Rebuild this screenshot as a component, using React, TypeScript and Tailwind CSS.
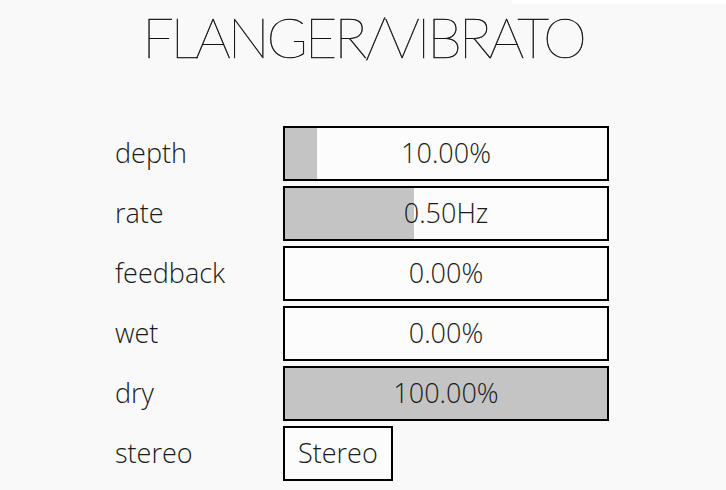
import React from 'react';

const sliders = [
  { label: 'depth', value: '10.00%', fill: 10 },
  { label: 'rate', value: '0.50Hz', fill: 40 },
  { label: 'feedback', value: '0.00%', fill: 0 },
  { label: 'wet', value: '0.00%', fill: 0 },
  { label: 'dry', value: '100.00%', fill: 100 },
];

export default function App() {
  return (
    <div className="relative w-[726px] h-[490px] bg-[#f9f9f9] overflow-hidden text-[#1a1a1a]" style={{ fontFamily: '"Open Sans", sans-serif' }}>
      {/* thin white strip top right */}
      <div className="absolute top-0 right-0 w-[214px] h-[4px] bg-white" />

      <h1
        className="text-center text-[56px] leading-none font-thin tracking-[-3.2px] pt-[9px] text-[#111] [-webkit-text-stroke:0.5px_#111]"
        style={{ fontFamily: 'Lato, sans-serif' }}
      >
        FLANGER/VIBRATO
      </h1>

      <div className="flex flex-col gap-[5px] pl-[115px] mt-[61px]">
        {sliders.map((s) => (
          <div key={s.label} className="flex items-center h-[55px]">
            <div className="w-[168px] text-[27px] font-light">{s.label}</div>
            <div className="relative w-[326px] h-[55px] border-2 border-black bg-[#fcfcfc]">
              <div className="absolute left-0 top-0 bottom-0 bg-[#c4c4c4]" style={{ width: `${s.fill}%` }} />
              <div className="relative flex h-full items-center justify-center text-[27px] font-light">
                {s.value}
              </div>
            </div>
          </div>
        ))}
        <div className="flex items-center h-[55px]">
          <div className="w-[168px] text-[27px] font-light">stereo</div>
          <div className="flex items-center h-[55px] px-[13px] border-2 border-black bg-[#fcfcfc] text-[27px] font-light">
            Stereo
          </div>
        </div>
      </div>
    </div>
  );
}
